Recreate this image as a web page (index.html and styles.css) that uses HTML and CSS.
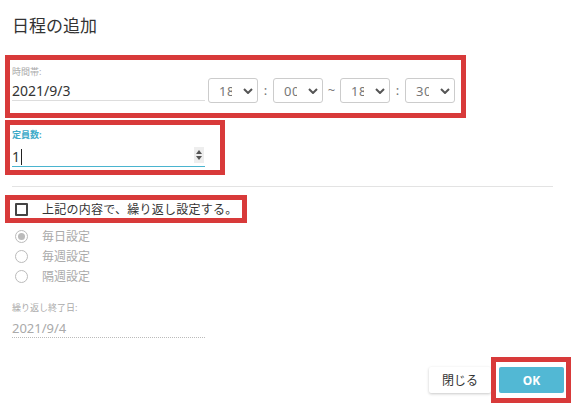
FILE: index.html
```html
<!DOCTYPE html>
<html lang="ja">
<head>
<meta charset="utf-8">
<title>日程の追加</title>
<link rel="stylesheet" href="styles.css">
</head>
<body>
<div class="dialog">
  <h1 class="title">日程の追加</h1>

  <div class="mark mark-time">
    <div class="label">時間帯:</div>
    <div class="time-row">
      <div class="line-input">2021/9/3</div>
      <div class="sel sel-a"><span class="sel-val">18</span><svg class="chev" viewBox="0 0 10 6" width="10" height="6"><path d="M1 1l4 4 4-4" fill="none" stroke="#555" stroke-width="2"/></svg></div>
      <span class="sep sep-a">:</span>
      <div class="sel"><span class="sel-val">00</span><svg class="chev" viewBox="0 0 10 6" width="10" height="6"><path d="M1 1l4 4 4-4" fill="none" stroke="#555" stroke-width="2"/></svg></div>
      <span class="sep sep-b">~</span>
      <div class="sel"><span class="sel-val">18</span><svg class="chev" viewBox="0 0 10 6" width="10" height="6"><path d="M1 1l4 4 4-4" fill="none" stroke="#555" stroke-width="2"/></svg></div>
      <span class="sep sep-a">:</span>
      <div class="sel"><span class="sel-val">30</span><svg class="chev" viewBox="0 0 10 6" width="10" height="6"><path d="M1 1l4 4 4-4" fill="none" stroke="#555" stroke-width="2"/></svg></div>
    </div>
  </div>

  <div class="mark mark-cap">
    <div class="label label-active">定員数:</div>
    <div class="line-input active">
      <span class="val">1</span><span class="caret"></span>
      <span class="spin"><svg viewBox="0 0 8 14" width="8" height="14"><path d="M4 2L7 6H1z M4 12L1 8H7z" fill="#555"/></svg></span>
    </div>
  </div>

  <hr class="divider">

  <div class="mark mark-repeat">
    <span class="checkbox"></span>
    <span class="check-text">上記の内容で、繰り返し設定する。</span>
  </div>

  <div class="radios">
    <div class="radio-row"><span class="radio checked"></span><span class="radio-text">毎日設定</span></div>
    <div class="radio-row"><span class="radio"></span><span class="radio-text">毎週設定</span></div>
    <div class="radio-row"><span class="radio"></span><span class="radio-text">隔週設定</span></div>
  </div>

  <div class="label end-label">繰り返し終了日:</div>
  <div class="line-input disabled">2021/9/4</div>

  <div class="actions">
    <button class="btn btn-close">閉じる</button>
    <div class="mark mark-ok"><button class="btn btn-ok">OK</button></div>
  </div>
</div>
</body>
</html>
```

FILE: styles.css
```css
* { box-sizing: border-box; }
html, body { margin: 0; padding: 0; background: #fff; }
body {
  width: 585px;
  height: 418px;
  overflow: hidden;
  font-family: "Noto Sans", "Noto Sans CJK JP", sans-serif;
  color: #333;
}
.dialog { display: flex; flex-direction: column; align-items: flex-start; }
.title {
  margin: 13px 0 0 12px;
  font-size: 17px;
  line-height: 26px;
  font-weight: 400;
  color: #333;
}
.mark { border: 5px solid #d83a3a; }
.mark-time {
  margin: 16px 0 0 5px;
  width: 461px;
  height: 63px;
  padding: 5px 0 0 2px;
}
.label {
  font-size: 9px;
  line-height: 13px;
  color: #aaa;
}
.label-active { color: #3daac8; font-weight: 700; }
.time-row { display: flex; align-items: flex-start; }
.line-input {
  width: 193px;
  height: 23px;
  border-bottom: 1px solid #ddd;
  font-size: 14px;
  line-height: 20px;
  padding-top: 4px;
  color: #333;
  position: relative;
  display: flex;
  align-items: center;
}
.time-row .line-input { margin-right: 3px; }
.sel {
  width: 50px;
  height: 25px;
  border: 1px solid #ccc;
  border-radius: 3px;
  display: flex;
  align-items: center;
  padding-left: 10px;
}
.sel-val {
  width: 13px;
  overflow: hidden;
  white-space: nowrap;
  font-size: 13px;
  color: #777;
  letter-spacing: 0.5px;
}
.chev { margin-left: 11px; }
.sep {
  height: 25px;
  line-height: 24px;
  text-align: center;
  font-size: 13px;
  color: #777;
}
.sep-a { width: 15px; }
.sep-b { width: 17px; }

.mark-cap {
  margin: 2px 0 0 5px;
  width: 220px;
  height: 55px;
  padding: 3px 0 0 2px;
}
.line-input.active {
  height: 26px;
  border-bottom-color: #4ab4cf;
  padding-top: 6px;
}
.caret {
  display: inline-block;
  width: 1px;
  height: 16px;
  background: #222;
  margin-left: 1px;
}
.spin {
  position: absolute;
  right: 1px;
  top: 6px;
  width: 10px;
  height: 16px;
  background: #eee;
  display: flex;
  align-items: center;
  justify-content: center;
}
.divider {
  margin: 11px 0 0 12px;
  width: 541px;
  border: 0;
  border-top: 1px solid #e3e3e3;
  height: 0;
}
.mark-repeat {
  margin: 8px 0 0 5px;
  width: 242px;
  height: 28px;
  display: flex;
  align-items: center;
  padding-left: 5px;
}
.checkbox {
  width: 13px;
  height: 13px;
  border: 2px solid #444;
  border-radius: 1px;
  margin-right: 14px;
}
.check-text { font-size: 12px; letter-spacing: 0.25px; color: #333; }
.radios { margin: 3px 0 0 15px; display: flex; flex-direction: column; }
.radio-row { height: 20px; display: flex; align-items: center; }
.radio {
  width: 13px;
  height: 13px;
  border: 1px solid #bbb;
  border-radius: 50%;
  margin-right: 14px;
  display: flex;
  align-items: center;
  justify-content: center;
}
.radio.checked::after {
  content: "";
  width: 7px;
  height: 7px;
  border-radius: 50%;
  background: #bbb;
}
.radio-text { font-size: 12px; color: #aaa; }
.end-label { margin: 15px 0 0 12px; }
.line-input.disabled {
  margin-left: 12px;
  height: 24px;
  border-bottom: 1px dotted #bbb;
  color: #aaa;
  font-size: 13px;
}
.actions {
  align-self: flex-end;
  margin: 19px 14px 0 0;
  display: flex;
  align-items: center;
}
.btn {
  font-family: "Noto Sans", "Noto Sans CJK JP", sans-serif;
  border: 0;
  cursor: pointer;
  font-size: 12px;
  height: 26px;
}
.btn-close {
  width: 62px;
  background: #fff;
  color: #333;
  box-shadow: 0 1px 3px rgba(0,0,0,0.22);
  border-radius: 2px;
}
.mark-ok {
  width: 80px;
  height: 46px;
  padding: 5px 1px 4px 3px;
}
.btn-ok {
  width: 65px;
  background: #52b8d4;
  color: #fff;
  font-weight: 700;
  border-radius: 2px;
}
```
